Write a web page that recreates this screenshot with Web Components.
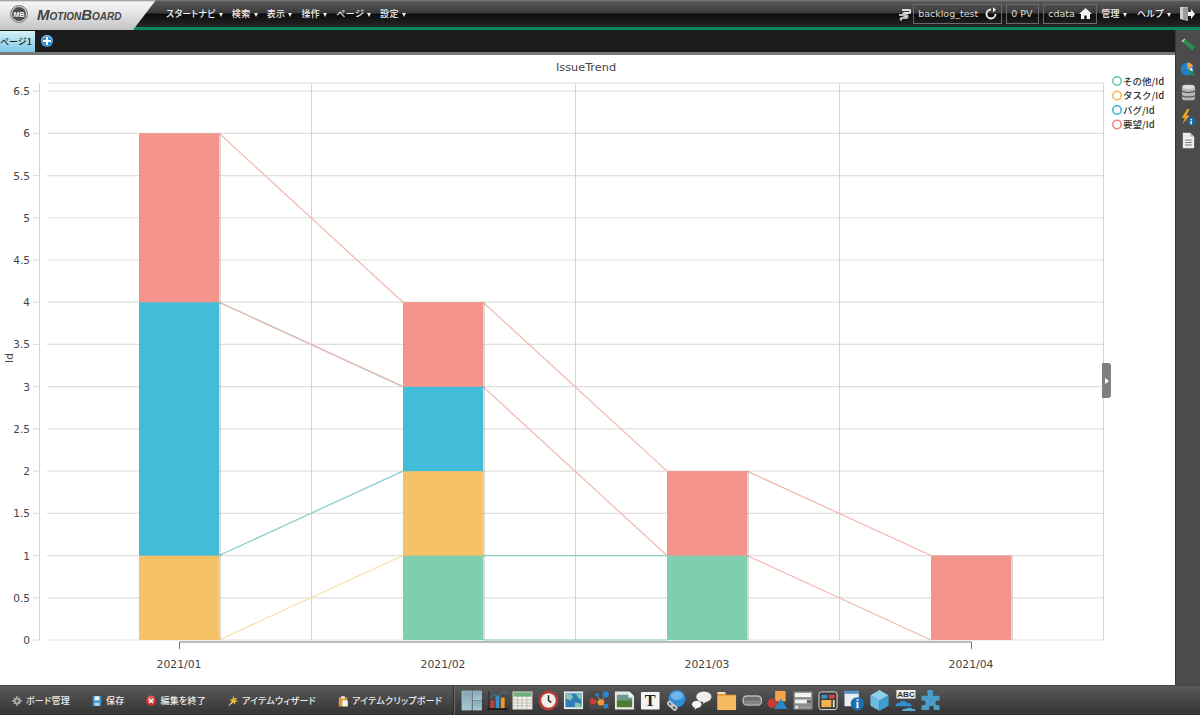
<!DOCTYPE html>
<html lang="ja">
<head>
<meta charset="utf-8">
<title>MotionBoard</title>
<style>
    html, body { margin: 0; padding: 0; height: 100%; overflow: hidden; background: #fff; }
    body { font-family: "DejaVu Sans", "Noto Sans CJK JP", sans-serif; }
</style>
</head>
<body>
<mb-app>
    <mb-header slot="header"></mb-header>
    <mb-tabbar slot="tabs"></mb-tabbar>
    <mb-chart slot="main"></mb-chart>
    <mb-sidebar slot="side"></mb-sidebar>
    <mb-footer slot="footer"></mb-footer>
</mb-app>

<script>
const ICONS = {
    // footer actions
    gear: `<g fill="#a8a8a8"><circle cx="10" cy="10" r="5.5"/><path d="M8.500 2h3v16h-3zM2 8.500h16v3H2zM4 6l2-2 10 10-2 2zM14 4l2 2L6 16l-2-2z"/></g><circle cx="10" cy="10" r="2.400" fill="#505050"/>`,
    save: `<path d="M3 2h14v16H3z" fill="#3f97d6"/><path d="M6 2h8v7H6z" fill="#e8f1f6"/><path d="M6 13h8v5H6z" fill="#b9d6ea"/>`,
    close: `<circle cx="10" cy="10" r="8.500" fill="#c9302c"/><circle cx="10" cy="7" r="6" fill="#e4605c"/><path d="M6.500 6.500l7 7M13.500 6.500l-7 7" stroke="#fff" stroke-width="2.400"/>`,
    wizard: `<path d="M11 1l1.500 5 5-2-3 4.500 4 2.500-5 .5 .5 5-3.500-3.500L3 18l5-7-5-3 5.500-.5z" fill="#e3b432"/><path d="M3 18l7-8" stroke="#f3e3a0" stroke-width="1.500"/>`,
    clip: `<path d="M3 4h14v15H3z" fill="#d99a3e"/><path d="M7 2h6v4H7z" fill="#e8e8e8"/><path d="M9 9h9v10H9z" fill="#f4f4f4"/>`,
    // toolbox
    layout: `<defs><linearGradient id="la" x1="0" y1="0" x2="0" y2="1"><stop offset="0" stop-color="#7fa6b6"/><stop offset="1" stop-color="#a9c8d4"/></linearGradient></defs><g fill="url(#la)" stroke="#b6ccd6" stroke-width=".6"><rect x=".5" y="1" width="10" height="20"/><rect x="12" y="1" width="9" height="9.500"/><rect x="12" y="11.500" width="9" height="9.500"/></g>`,
    chart: `<path d="M0 19h21v2H0z" fill="#1a1a1a"/><path d="M1 1h1v18H1z" fill="#2a2a2a"/><path d="M3 11h4v8H3z" fill="#d23a30"/><path d="M8.500 6h4v13h-4z" fill="#2f8fd0"/><path d="M14 8h4v11h-4z" fill="#f09a22"/><path d="M2 9l5-4 4 2 5-5 4 1" fill="none" stroke="#3a7fb0" stroke-width="1"/>`,
    table: `<rect x=".5" y="2" width="20" height="18" fill="#f2f2ea" stroke="#c8c8c0"/><path d="M1 2.500h19V7H1z" fill="#6fae7a"/><path d="M1 10.500h19M1 13.500h19M1 16.500h19M5.500 7v13M10 7v13M15 7v13" stroke="#a8a8a0" stroke-width=".7"/>`,
    clock: `<circle cx="10.500" cy="11" r="10.500" fill="#b23c36"/><circle cx="10.500" cy="11" r="7.600" fill="#f3efe8"/><path d="M10.500 5.500V11l3 2" fill="none" stroke="#222" stroke-width="1.500"/>`,
    map: `<rect x=".5" y="1.500" width="20" height="18.500" fill="#e8eef0"/><rect x="2" y="3.500" width="17" height="14.500" fill="#2f7fb5"/><path d="M2 4h6l2 4-3 3-5-2zM13 4h6v6l-3-1zM12 13l5 1 2 4h-7z" fill="#8cc4b4"/>`,
    network: `<rect x="0" y="2" width="21" height="18" fill="#4a4a4a"/><path d="M4 12l8 1 5-9M12 13l5 4M12 13L8 5" stroke="#888" stroke-width="1" fill="none"/><circle cx="3.500" cy="12" r="3" fill="#d33c34"/><circle cx="12" cy="13" r="3.300" fill="#ef9a2a"/><circle cx="17" cy="4.500" r="3.300" fill="#2a86c8"/><circle cx="17" cy="17" r="2.500" fill="#2a86c8"/><circle cx="8" cy="5" r="1.800" fill="#2a86c8"/>`,
    image: `<path d="M.5 1.500h15l5 5v14H.5z" fill="#e4e8e2"/><path d="M15.500 1.500v5h5z" fill="#fff"/><path d="M2.500 5h12v3h4v5H2.500z" fill="#6b9a8c"/><path d="M2.500 11h16v7h-16z" fill="#4d7a32"/>`,
    text: `<rect x=".5" y="2" width="19.500" height="18.500" rx="1" fill="#f4f4f4"/><text x="10.200" y="17.200" text-anchor="middle" font-family="Liberation Serif, serif" font-weight="700" font-size="17" fill="#222">T</text>`,
    globe: `<circle cx="12" cy="9" r="9" fill="#2f8fd6"/><ellipse cx="12" cy="6" rx="6.500" ry="4.500" fill="#6fb6e8"/><g fill="none" stroke="#c4c4c4" stroke-width="2"><rect x="2" y="13" width="6" height="3.500" rx="1.700" transform="rotate(45 5 15)"/><rect x="6" y="16.500" width="6" height="3.500" rx="1.700" transform="rotate(45 9 18)"/></g>`,
    chat: `<ellipse cx="13" cy="7" rx="8" ry="5.500" fill="#eee"/><path d="M13 11l-1 4 5-4z" fill="#eee"/><ellipse cx="5.500" cy="15" rx="5" ry="3.800" fill="#f6f6f6"/><path d="M4 18l-1 3 4-3z" fill="#f6f6f6"/>`,
    folder: `<path d="M1 2h8l1 3h10.500v16H1z" fill="#e69a3a"/><path d="M1 6h19.500v15H1z" fill="#f6b860"/><path d="M1 2h8l.500 2H1z" fill="#f8e6c8"/>`,
    button: `<rect x="0" y="5.500" width="20.500" height="11" rx="4.500" fill="#b8b8b8"/><rect x="1.500" y="7" width="17.500" height="8" rx="3.500" fill="#6e6e6e"/><rect x="1.500" y="11" width="17.500" height="4" rx="2" fill="#858585"/>`,
    shapes: `<path d="M8 1h11v11H8z" fill="#f2a545"/><circle cx="5" cy="14" r="5" fill="#c73a34"/><path d="M14 9l7 11H7z" fill="#2a86c8"/>`,
    form: `<rect x="0" y="1.500" width="20" height="19" fill="#8a8a8a"/><rect x="1.500" y="3" width="17" height="4.500" fill="#f2f2f2"/><rect x="1.500" y="10" width="17" height="4" fill="#f2f2f2"/><path d="M14 10.500h4.500V14H14z" fill="#666"/><rect x="2" y="16.500" width="3" height="3" fill="#eee"/><path d="M7 18h11" stroke="#aaa"/>`,
    dashboard: `<rect x=".5" y="2" width="19" height="18.500" rx="2.500" fill="#3a3a3a" stroke="#e2e2e2" stroke-width="1"/><path d="M3 5h6.500v4H3z" fill="#3f8bc0"/><path d="M11 5h6v4h-6z" fill="#d0473f"/><path d="M3 10.500h10.500V18H3z" fill="#f2b04e"/><path d="M15 10.500h2V18h-2z" fill="#f2d6a0"/>`,
    info: `<rect x="0" y="1" width="15" height="16" fill="#e8eef2"/><rect x="0" y="1" width="15" height="3" fill="#4d94cc"/><circle cx="13.500" cy="14.500" r="7" fill="#1a6fb0"/><text x="13.500" y="19" text-anchor="middle" font-family="Liberation Serif, serif" font-weight="700" font-size="12" fill="#fff">i</text>`,
    cube: `<path d="M10.500 0l9.500 5.500-9.500 5.500L1 5.500z" fill="#8fd0ee"/><path d="M1 5.500l9.500 5.500v11L1 16.500z" fill="#6abbe2"/><path d="M20 5.500L10.500 11v11l9.500-5.500z" fill="#3f9ed0"/>`,
    abc: `<rect x="1" y="0" width="20" height="9" fill="#efefef"/><text x="11" y="7.800" text-anchor="middle" font-family="Liberation Sans, sans-serif" font-weight="700" font-size="8.500" fill="#333">ABC</text><path d="M0 17c0-3 3-4 4-3 1-3 7-4 8 0 2-1 5 0 5 3z" fill="#2f8fd0"/><path d="M7 22c0-2 2-3 4-2 1-2 6-2 7 0 2-1 3 1 3 2z" fill="#4eaadf"/>`,
    puzzle: `<path d="M7 2a3 2.500 0 0 1 6 0v4h7v5h-2a2.500 2.500 0 0 0 0 5h2v5h-6v-2a2.500 2.500 0 0 0-5 0v2H1v-5H3a2.500 2.500 0 0 0 0-5H1V6h7z" fill="#4d9dc9"/>`,
    // sidebar
    pencil: `<path d="M2 6l4-4 15 12-4 5z" fill="#2e8b4f"/><path d="M2 6l4-4 1.500 1-4 4.500z" fill="#bfc8c0"/><path d="M17 19l4-5 1 6z" fill="#1d5e35"/>`,
    pie: `<circle cx="10" cy="11" r="9" fill="#1f7fc8"/><path d="M10 11V2a9 9 0 0 1 8 5z" fill="#f2a23a"/><path d="M11 12l5-3 2 5z" fill="#e9edf0"/><path d="M11 12l9 8" stroke="#2e8b4f" stroke-width="3"/>`,
    database: `<rect x="1.500" y="1" width="17" height="20" rx="4" fill="#b8b8b8"/><ellipse cx="10" cy="4" rx="7.500" ry="2.800" fill="#dedede"/><path d="M1.500 9c3 2.500 14 2.500 17 0M1.500 15c3 2.500 14 2.500 17 0" fill="none" stroke="#4b4b4b" stroke-width="1.300"/>`,
    bolt: `<path d="M9 0L2 11h4l-3 8 9-11H8l4-8z" fill="#eaa32c"/><circle cx="14" cy="15" r="5" fill="#1d6c9e"/><path d="M13 12.500h2v1.500h-2zM13 15h2v4h-2z" fill="#e6eef2"/>`,
    doc: `<path d="M3 1h9l5 5v14H3z" fill="#ececec"/><path d="M12 1v5h5z" fill="#bdbdbd"/><path d="M6 10h8M6 13h8M6 16h8" stroke="#777" stroke-width="1.200"/>`,
    // header
    link: `<path d="M5 3h7c2 0 2 3 0 3H8c-2 0-3 3 0 3h2" fill="none" stroke="#ddd" stroke-width="2"/><path d="M2 8h7c2 0 2 3 0 3H5c-2 0-2 2 0 2" fill="none" stroke="#bbb" stroke-width="2"/>`,
    reload: `<path d="M7 2.500a4.500 4.500 0 1 0 4.500 4.500" fill="none" stroke="#f2f2f2" stroke-width="1.800"/><path d="M9 0v5.500l3-2.800z" fill="#f2f2f2"/>`,
    home: `<path d="M6.500 1L0 7h2v5h3.300V8.500h2.400V12H11V7h2z" fill="#f4f4f4"/>`,
    exit: `<path d="M1 1h8v14L1 13z" fill="#cfcfcf"/><path d="M4 2l5-1v14l-5-2z" fill="#9b9b9b"/><path d="M9 6h3V3l4 5-4 5v-3H9z" fill="#efefef"/>`
};

class MbIcon extends HTMLElement {
    connectedCallback() {
        const size = this.getAttribute("size") || 21;
        const box = this.getAttribute("box") || "0 0 21 22";
        this.attachShadow({ mode: "open" });
        this.shadowRoot.innerHTML = `
            <style>
                :host {
                    display: block;
                    flex: none;
                    width: ${size}px;
                    height: ${size}px;
                }
                svg {
                    display: block;
                    width: 100%;
                    height: 100%;
                }
            </style>
            <svg viewBox="${box}">${ICONS[this.getAttribute("name")] || ""}</svg>
        `;
    }
}

class MbNavItem extends HTMLElement {
    connectedCallback() {
        this.attachShadow({ mode: "open" });
        this.shadowRoot.innerHTML = `
            <style>
                :host {
                    display: flex;
                    align-items: center;
                    gap: 3px;
                    color: #f0f0f0;
                    font: 500 9px "Noto Sans CJK JP", sans-serif;
                    font-feature-settings: "palt";
                    letter-spacing: .4px;
                    white-space: nowrap;
                }
                i {
                    width: 0;
                    height: 0;
                    margin-top: 2px;
                    border: 2.5px solid transparent;
                    border-top: 4px solid #f0f0f0;
                    border-bottom: 0;
                }
            </style>
            <slot></slot><i></i>
        `;
    }
}

class MbInfoBox extends HTMLElement {
    connectedCallback() {
        this.attachShadow({ mode: "open" });
        this.shadowRoot.innerHTML = `
            <style>
                :host {
                    display: flex;
                    align-items: center;
                    justify-content: space-between;
                    box-sizing: border-box;
                    height: 20px;
                    padding: 0 4px;
                    border: 1px solid #6a6a6a;
                    color: #dcdcdc;
                    font: 9.5px "DejaVu Sans", sans-serif;
                    white-space: nowrap;
                }
            </style>
            <slot></slot>
        `;
    }
}

class MbHeader extends HTMLElement {
    connectedCallback() {
        this.attachShadow({ mode: "open" });
        this.shadowRoot.innerHTML = `
            <style>
                :host {
                    display: flex;
                    height: 30px;
                    background:
                        linear-gradient(#0a8a5c, #0a8a5c) bottom / 100% 3px no-repeat,
                        linear-gradient(#7d7d7d 0, #565656 2px, #3b3b3b 13px, #0c0c0c 14px, #262626 27px);
                }
                .logo {
                    display: flex;
                    align-items: center;
                    gap: 9px;
                    flex: none;
                    box-sizing: border-box;
                    width: 156px;
                    padding: 0 0 2px 10px;
                    background: linear-gradient(#8a8a8a 0, #f6f6f6 2px, #e6e6e6 12px, #c4c4c4 30px);
                    clip-path: polygon(0 0, 156px 0, 133px 30px, 0 30px);
                }
                .mark {
                    display: grid;
                    place-items: center;
                    box-sizing: border-box;
                    width: 18px;
                    height: 18px;
                    border-radius: 50%;
                    background: #4d4d4d;
                    border: 1px solid #8c8c8c;
                    box-shadow: inset 0 0 0 1px #e0e0e0;
                    color: #fff;
                    font: 700 7px "Liberation Sans", sans-serif;
                }
                .name {
                    color: #444;
                    font: italic 700 10px "Liberation Sans", sans-serif;
                    white-space: nowrap;
                }
                .name b {
                    font-size: 15px;
                }
                nav {
                    display: flex;
                    align-items: center;
                    gap: 9px;
                    height: 27px;
                    margin-left: 10px;
                }
                .right {
                    display: flex;
                    align-items: center;
                    height: 27px;
                    margin-left: auto;
                    padding-right: 5px;
                }
            </style>
            <div class="logo">
                <span class="mark">MB</span>
                <span class="name"><b>M</b>OTION<b>B</b>OARD</span>
            </div>
            <nav>
                <mb-nav-item style="letter-spacing:.2px">スタートナビ</mb-nav-item>
                <mb-nav-item>検索</mb-nav-item>
                <mb-nav-item>表示</mb-nav-item>
                <mb-nav-item>操作</mb-nav-item>
                <mb-nav-item>ページ</mb-nav-item>
                <mb-nav-item>設定</mb-nav-item>
            </nav>
            <div class="right">
                <mb-icon name="link" size="14" box="0 0 14 14" style="margin-right:2px"></mb-icon>
                <mb-info-box style="width:89px">backlog_test<mb-icon name="reload" size="13" box="0 0 13 13"></mb-icon></mb-info-box>
                <mb-info-box style="width:33px;margin-left:4px">0 PV</mb-info-box>
                <mb-info-box style="width:54px;margin-left:4px">cdata<mb-icon name="home" size="13" box="0 0 13 13"></mb-icon></mb-info-box>
                <mb-nav-item style="margin-left:4px">管理</mb-nav-item>
                <mb-nav-item style="margin-left:10px">ヘルプ</mb-nav-item>
                <mb-icon name="exit" size="16" box="0 0 16 16" style="margin-left:8px"></mb-icon>
            </div>
        `;
    }
}

class MbTabbar extends HTMLElement {
    connectedCallback() {
        this.attachShadow({ mode: "open" });
        this.shadowRoot.innerHTML = `
            <style>
                :host {
                    display: flex;
                    align-items: center;
                    gap: 6px;
                    box-sizing: border-box;
                    height: 25px;
                    overflow: hidden;
                    background: #1c1c1c;
                    border-bottom: 3px solid #777;
                }
                .tab {
                    box-sizing: border-box;
                    align-self: flex-end;
                    width: 35px;
                    height: 21px;
                    background: linear-gradient(#d5f0f6, #7fc6e6);
                    color: #222;
                    font: 500 9px/21px "Noto Sans CJK JP", sans-serif;
                    font-feature-settings: "palt";
                    white-space: nowrap;
                }
                .add {
                    position: relative;
                    width: 12px;
                    height: 12px;
                    border-radius: 50%;
                    background: #2f8fd6;
                    box-shadow: inset 0 1px 2px #a6d6f4;
                }
                .add::before, .add::after {
                    content: "";
                    position: absolute;
                    background: #fff;
                }
                .add::before { left: 2px; top: 5px; width: 8px; height: 2px; }
                .add::after { left: 5px; top: 2px; width: 2px; height: 8px; }
            </style>
            <div class="tab">ページ1</div>
            <div class="add"></div>
        `;
    }
}

class MbChart extends HTMLElement {
    connectedCallback() {
        this.attachShadow({ mode: "open" });
        this._render();
    }

    _render() {
        const left = 47, right = 1103, top = 83, base = 640, unit = 84.45;
        const y = (v) => base - v * unit;
        const centers = [179, 443, 707, 971];
        const months = ["2021/01", "2021/02", "2021/03", "2021/04"];
        const barW = 80;
        const series = [
            { name: "その他/Id", color: "#7fcfae", ring: "#5ec8a4", line: "#8ed4c4", values: [0, 1, 1, 0] },
            { name: "タスク/Id", color: "#f5c268", ring: "#f7b44a", line: "#fcdcaa", values: [1, 1, 0, 0] },
            { name: "バグ/Id", color: "#41bdd9", ring: "#2eb4d8", line: "#86d3df", values: [3, 1, 0, 0] },
            { name: "要望/Id", color: "#f4948a", ring: "#f47f74", line: "#f0b8ad", values: [2, 1, 1, 1] }
        ];

        let grid = "";
        let labels = "";
        for (let i = 0; i <= 13; i++) {
            const v = i / 2;
            const py = y(v);
            grid += `<line x1="${left}" x2="${right}" y1="${py}" y2="${py}" class="grid"/>`;
            grid += `<line x1="33" x2="40" y1="${py}" y2="${py}" class="grid"/>`;
            labels += `<text x="30" y="${py + 4}" text-anchor="end">${v}</text>`;
        }
        [311, 575, 839, 1103].forEach((x) => {
            grid += `<line x1="${x + 0.5}" x2="${x + 0.5}" y1="${top}" y2="${base}" class="grid v"/>`;
        });
        grid += `<line x1="39.500" x2="39.500" y1="${top}" y2="${base}" class="grid v"/>`;
        grid += `<line x1="${left}" x2="${right}" y1="${top}" y2="${top}" class="grid"/>`;

        let bars = "";
        let lines = "";
        const stack = centers.map(() => 0);
        series.forEach((s) => {
            const from = stack.slice();
            s.values.forEach((v, i) => {
                if (!v) return;
                const x = centers[i] - barW / 2;
                bars += `<rect x="${x + 1}" y="${y(from[i] + v)}" width="${barW + 1}" height="${v * unit}" fill="#000" opacity=".14"/>`;
                bars += `<rect x="${x}" y="${y(from[i] + v)}" width="${barW}" height="${v * unit}" fill="${s.color}"/>`;
            });
            for (let i = 0; i < 3; i++) {
                if (!s.values[i] || !s.values[i + 1]) continue;
                const x1 = centers[i] + barW / 2, x2 = centers[i + 1] - barW / 2;
                lines += `<line x1="${x1}" x2="${x2}" y1="${y(from[i] + s.values[i])}" y2="${y(from[i + 1] + s.values[i + 1])}" stroke="${s.line}" stroke-width="1.2"/>`;
                lines += `<line x1="${x1}" x2="${x2}" y1="${y(from[i])}" y2="${y(from[i + 1])}" stroke="${s.line}" stroke-width="1.2"/>`;
            }
            s.values.forEach((v, i) => { stack[i] += v; });
        });

        const legend = series.map((s, i) => {
            const ly = 81 + i * 14.5;
            return `<circle cx="1117" cy="${ly}" r="4.2" fill="#fff" stroke="${s.ring}" stroke-width="1.5"/>
                <text x="1123" y="${ly + 3.5}" class="legend">${s.name}</text>`;
        }).join("");

        const ticks = months.map((m, i) =>
            `<text x="${centers[i]}" y="668" text-anchor="middle" font-size="10.800">${m}</text>`).join("");

        this.shadowRoot.innerHTML = `
            <style>
                :host {
                    display: block;
                    position: relative;
                    height: 630px;
                    background: #fff;
                }
                svg {
                    display: block;
                    font: 10.5px "DejaVu Sans", "Noto Sans CJK JP", sans-serif;
                    fill: #444;
                }
                .grid {
                    stroke: #e0e0e0;
                    stroke-width: 1.2;
                }
                .grid.v {
                    stroke: #d4d4d4;
                    stroke-width: 1;
                }
                .legend {
                    font-size: 9.5px;
                    font-family: "Noto Sans CJK JP", sans-serif;
                    font-weight: 500;
                    fill: #333;
                }
                .handle {
                    position: absolute;
                    left: 1102px;
                    top: 308px;
                    display: grid;
                    place-items: center;
                    width: 9px;
                    height: 35px;
                    background: #808080;
                    border-radius: 0 3px 3px 0;
                }
                .handle::before {
                    content: "";
                    border: 3px solid transparent;
                    border-left: 4px solid #fff;
                    border-right: 0;
                }
            </style>
            <svg width="1175" height="630" viewBox="0 55 1175 630">
                <text x="586" y="71" text-anchor="middle" font-size="11.300">IssueTrend</text>
                <text transform="translate(13 358) rotate(-90)" text-anchor="middle">Id</text>
                ${grid}
                ${lines}
                ${bars}
                <path d="M179.500 649V642H971.500V649" fill="none" stroke="#777"/>
                ${labels}
                ${ticks}
                ${legend}
            </svg>
            <div class="handle"></div>
        `;
    }
}

class MbSidebar extends HTMLElement {
    connectedCallback() {
        this.attachShadow({ mode: "open" });
        this.shadowRoot.innerHTML = `
            <style>
                :host {
                    display: flex;
                    flex-direction: column;
                    align-items: center;
                    gap: 7.5px;
                    box-sizing: border-box;
                    width: 25px;
                    height: 655px;
                    padding-top: 7px;
                    background: #4b4b4b;
                    border-left: 1px solid #3a3a3a;
                }
            </style>
            <mb-icon name="pencil" size="16" box="0 0 22 22"></mb-icon>
            <mb-icon name="pie" size="16" box="0 0 22 22"></mb-icon>
            <mb-icon name="database" size="17" box="0 0 20 22"></mb-icon>
            <mb-icon name="bolt" size="16" box="0 0 20 20"></mb-icon>
            <mb-icon name="doc" size="17" box="0 0 20 21"></mb-icon>
        `;
    }
}

class MbFootAction extends HTMLElement {
    connectedCallback() {
        this.attachShadow({ mode: "open" });
        this.shadowRoot.innerHTML = `
            <style>
                :host {
                    display: flex;
                    align-items: center;
                    gap: 3px;
                    color: #ececec;
                    font: 500 9px "Noto Sans CJK JP", sans-serif;
                    font-feature-settings: "palt";
                    letter-spacing: .25px;
                    white-space: nowrap;
                }
            </style>
            <mb-icon name="${this.getAttribute("icon")}" size="12" box="0 0 20 20"></mb-icon>
            <slot></slot>
        `;
    }
}

class MbFooter extends HTMLElement {
    connectedCallback() {
        const tools = ["layout", "chart", "table", "clock", "map", "network", "image", "text", "globe", "chat",
            "folder", "button", "shapes", "form", "dashboard", "info", "cube", "abc", "puzzle"];
        this.attachShadow({ mode: "open" });
        this.shadowRoot.innerHTML = `
            <style>
                :host {
                    display: flex;
                    align-items: center;
                    box-sizing: border-box;
                    height: 30px;
                    padding-left: 11px;
                    background: linear-gradient(#5c5c5c 0, #565656 2px, #3d3d3d 22px, #333 30px);
                    border-top: 1px solid #444;
                }
                .actions {
                    display: flex;
                    align-items: center;
                    gap: 21px;
                }
                .sep {
                    width: 1px;
                    height: 30px;
                    margin: 0 6px 0 11px;
                    background: #2c2c2c;
                    border-right: 1px solid #6a6a6a;
                }
                .tools {
                    display: flex;
                    align-items: center;
                    gap: 4.5px;
                }
            </style>
            <div class="actions">
                <mb-foot-action icon="gear">ボード管理</mb-foot-action>
                <mb-foot-action icon="save">保存</mb-foot-action>
                <mb-foot-action icon="close">編集を終了</mb-foot-action>
                <mb-foot-action icon="wizard">アイテムウィザード</mb-foot-action>
                <mb-foot-action icon="clip">アイテムクリップボード</mb-foot-action>
            </div>
            <div class="sep"></div>
            <div class="tools">
                ${tools.map((t) => `<mb-icon name="${t}"></mb-icon>`).join("")}
            </div>
        `;
    }
}

class MbApp extends HTMLElement {
    connectedCallback() {
        this.attachShadow({ mode: "open" });
        this.shadowRoot.innerHTML = `
            <style>
                :host {
                    display: grid;
                    grid-template-columns: 1175px 25px;
                    grid-template-rows: 30px 25px 630px 30px;
                    width: 1200px;
                    height: 715px;
                }
                ::slotted([slot="header"]), ::slotted([slot="footer"]) {
                    grid-column: 1 / 3;
                }
                ::slotted([slot="side"]) {
                    grid-column: 2;
                    grid-row: 2 / 4;
                }
            </style>
            <slot name="header"></slot>
            <slot name="tabs"></slot>
            <slot name="side"></slot>
            <slot name="main"></slot>
            <slot name="footer"></slot>
        `;
    }
}

customElements.define("mb-icon", MbIcon);
customElements.define("mb-nav-item", MbNavItem);
customElements.define("mb-info-box", MbInfoBox);
customElements.define("mb-header", MbHeader);
customElements.define("mb-tabbar", MbTabbar);
customElements.define("mb-chart", MbChart);
customElements.define("mb-sidebar", MbSidebar);
customElements.define("mb-foot-action", MbFootAction);
customElements.define("mb-footer", MbFooter);
customElements.define("mb-app", MbApp);
</script>
</body>
</html>
